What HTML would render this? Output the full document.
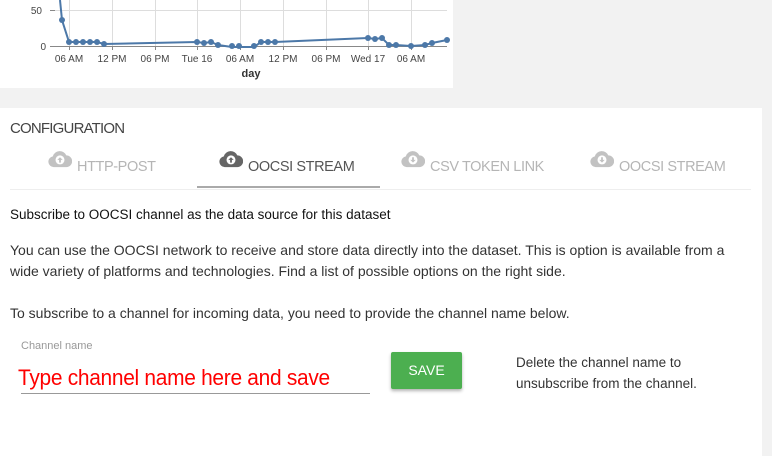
<!DOCTYPE html>
<html><head><style>
body{margin:0;width:772px;height:456px;background:#f2f2f2;font-family:"Liberation Sans",sans-serif;position:relative;overflow:hidden}
.chart{position:absolute;left:0;top:0;width:453px;height:88px;background:#fff}
.card{position:absolute;left:0;top:108px;width:762px;height:348px;background:#fff}
.t{position:absolute;white-space:nowrap}
.tab{position:absolute;top:159px;font-size:14.5px;color:#b5b5b5;letter-spacing:-0.4px}
.tab svg{position:absolute;left:-29px;top:-9px}
p{margin:0}
</style></head><body>
<div class="chart">
<svg width="453" height="88" style="position:absolute;left:0;top:0">
<g stroke="#ddd" stroke-width="1">
<line x1="55" y1="10.5" x2="447" y2="10.5"/>
<line x1="69.5" y1="0" x2="69.5" y2="46"/><line x1="112.5" y1="0" x2="112.5" y2="46"/><line x1="155.5" y1="0" x2="155.5" y2="46"/><line x1="197.5" y1="0" x2="197.5" y2="46"/><line x1="240.5" y1="0" x2="240.5" y2="46"/><line x1="283.5" y1="0" x2="283.5" y2="46"/><line x1="326.5" y1="0" x2="326.5" y2="46"/><line x1="368.5" y1="0" x2="368.5" y2="46"/><line x1="411.5" y1="0" x2="411.5" y2="46"/>
</g>
<g stroke="#888"><line x1="55" y1="46.5" x2="447" y2="46.5"/><line x1="50" y1="10.5" x2="55" y2="10.5"/><line x1="50" y1="46.5" x2="55" y2="46.5"/>
<line x1="69.5" y1="46" x2="69.5" y2="50"/><line x1="112.5" y1="46" x2="112.5" y2="50"/><line x1="155.5" y1="46" x2="155.5" y2="50"/><line x1="197.5" y1="46" x2="197.5" y2="50"/><line x1="240.5" y1="46" x2="240.5" y2="50"/><line x1="283.5" y1="46" x2="283.5" y2="50"/><line x1="326.5" y1="46" x2="326.5" y2="50"/><line x1="368.5" y1="46" x2="368.5" y2="50"/><line x1="411.5" y1="46" x2="411.5" y2="50"/></g>
<polyline fill="none" stroke="#4c78a8" stroke-width="2" points="60,0 62,20 69,42 76,42 83,42 90,42 97,42 104,44 197,42 204,43 211,42 218,45 232,47 239,47 254,47 261,42 268,42 275,42 368,38 375,39 382,38 389,45 396,45 411,46 425,45 432,43 447,40"/>
<g fill="#4c78a8">
<circle cx="62" cy="20" r="3"/><circle cx="69" cy="42" r="3"/><circle cx="76" cy="42" r="3"/><circle cx="83" cy="42" r="3"/><circle cx="90" cy="42" r="3"/><circle cx="97" cy="42" r="3"/><circle cx="104" cy="44" r="3"/><circle cx="197" cy="42" r="3"/><circle cx="204" cy="43" r="3"/><circle cx="211" cy="42" r="3"/><circle cx="218" cy="45" r="3"/><circle cx="232" cy="46" r="3"/><circle cx="239" cy="46" r="3"/><circle cx="254" cy="46" r="3"/><circle cx="261" cy="42" r="3"/><circle cx="268" cy="42" r="3"/><circle cx="275" cy="42" r="3"/><circle cx="368" cy="38" r="3"/><circle cx="375" cy="39" r="3"/><circle cx="382" cy="38" r="3"/><circle cx="389" cy="45" r="3"/><circle cx="396" cy="45" r="3"/><circle cx="411" cy="46" r="3"/><circle cx="425" cy="45" r="3"/><circle cx="432" cy="43" r="3"/><circle cx="447" cy="40" r="3"/></g>
<g font-family="Liberation Sans" font-size="10" fill="#444" text-anchor="middle">
<text x="42" y="14" text-anchor="end">50</text><text x="46" y="50" text-anchor="end">0</text>
<text x="69" y="62">06 AM</text><text x="112" y="62">12 PM</text><text x="155" y="62">06 PM</text><text x="197" y="62">Tue 16</text><text x="240" y="62">06 AM</text><text x="283" y="62">12 PM</text><text x="326" y="62">06 PM</text><text x="368" y="62">Wed 17</text><text x="411" y="62">06 AM</text>
<text x="251" y="77" font-weight="bold" font-size="11" fill="#333">day</text></g>
</svg></div>
<div class="card"></div>
<div class="t" style="left:10px;top:120px;font-size:15px;color:#444;letter-spacing:-0.8px">CONFIGURATION</div>
<div class="tab" style="left:77px">
<svg width="24" height="18" viewBox="0 0 26 20"><path d="M6 19a6 6 0 0 1-1-11.9A8 8 0 0 1 20 6a6.5 6.5 0 0 1 0 13z" fill="#c2c2c2"/><circle cx="13" cy="11" r="5" fill="#fff"/><path d="M13 8l-3 3h2v3h2v-3h2z" fill="#c2c2c2"/></svg>HTTP-POST</div>
<div class="tab" style="left:248px;color:#555">
<svg width="24" height="18" viewBox="0 0 26 20"><path d="M6 19a6 6 0 0 1-1-11.9A8 8 0 0 1 20 6a6.5 6.5 0 0 1 0 13z" fill="#666"/><circle cx="13" cy="11" r="5" fill="#fff"/><path d="M13 8l-3 3h2v3h2v-3h2z" fill="#666"/></svg>OOCSI STREAM</div>
<div class="tab" style="left:430px">
<svg width="24" height="18" viewBox="0 0 26 20"><path d="M6 19a6 6 0 0 1-1-11.9A8 8 0 0 1 20 6a6.5 6.5 0 0 1 0 13z" fill="#c2c2c2"/><circle cx="13" cy="11" r="5" fill="#fff"/><path d="M13 14l-3-3h2V8h2v3h2z" fill="#c2c2c2"/></svg>CSV TOKEN LINK</div>
<div class="tab" style="left:619px">
<svg width="24" height="18" viewBox="0 0 26 20"><path d="M6 19a6 6 0 0 1-1-11.9A8 8 0 0 1 20 6a6.5 6.5 0 0 1 0 13z" fill="#c2c2c2"/><circle cx="13" cy="11" r="5" fill="#fff"/><path d="M13 14l-3-3h2V8h2v3h2z" fill="#c2c2c2"/></svg>OOCSI STREAM</div>
<div style="position:absolute;left:10px;top:189px;width:741px;height:1px;background:#eee"></div>
<div style="position:absolute;left:197px;top:186px;width:183px;height:2px;background:#aaa"></div>
<div class="t" style="left:10px;top:207px;font-size:13.5px;color:#111">Subscribe to OOCSI channel as the data source for this dataset</div>
<div class="t" style="left:10px;top:240px;font-size:14px;color:#333;line-height:21px">You can use the OOCSI network to receive and store data directly into the dataset. This is option is available from a<br>wide variety of platforms and technologies. Find a list of possible options on the right side.</div>
<div class="t" style="left:10px;top:305px;font-size:14px;color:#333">To subscribe to a channel for incoming data, you need to provide the channel name below.</div>
<div class="t" style="left:21px;top:340px;font-size:11px;color:#999">Channel name</div>
<div class="t" style="left:18px;top:365px;font-size:22px;color:#f00;letter-spacing:-0.3px;transform:scaleX(0.95);transform-origin:left">Type channel name here and save</div>
<div style="position:absolute;left:21px;top:393px;width:349px;height:1px;background:#999"></div>
<div style="position:absolute;left:391px;top:352px;width:71px;height:37px;background:#4caf50;border-radius:2px;box-shadow:0 2px 3px rgba(0,0,0,.3);color:#fff;font-size:14px;text-align:center;line-height:37px">SAVE</div>
<div class="t" style="left:516px;top:352px;font-size:13.5px;color:#333;line-height:21px">Delete the channel name to<br>unsubscribe from the channel.</div>
</body></html>
